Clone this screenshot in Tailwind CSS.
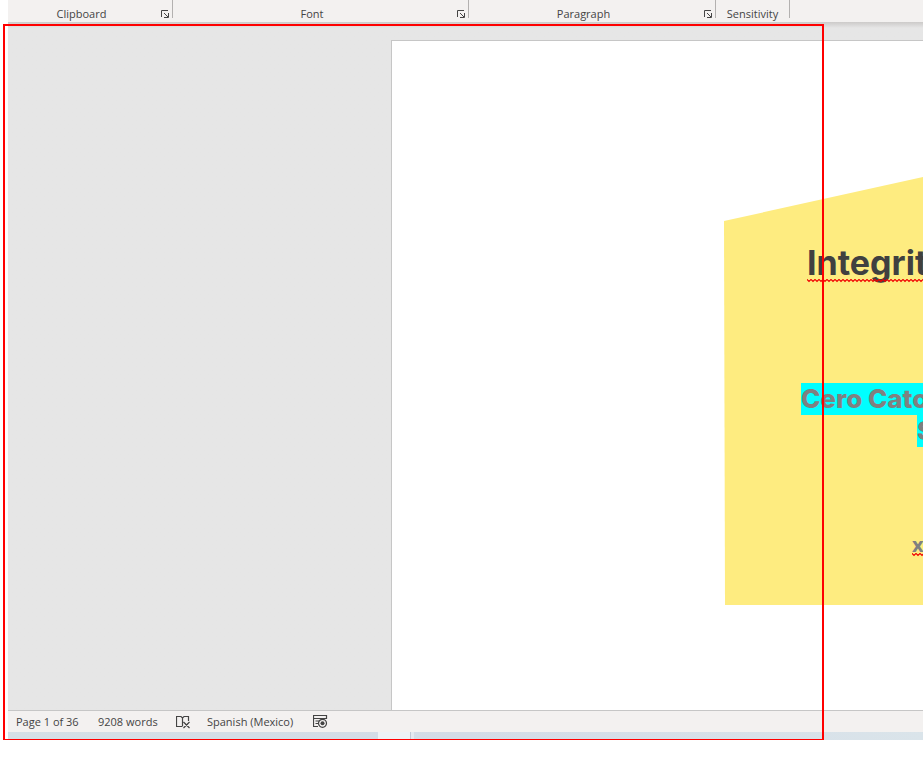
<!DOCTYPE html>
<html lang="en">
<head>
<meta charset="utf-8">
<meta name="viewport" content="width=device-width, initial-scale=1">
<title>Document editor</title>
<script src="https://cdn.jsdelivr.net/npm/@tailwindcss/browser@4"></script>
</head>
<body class="relative min-h-screen overflow-x-hidden bg-white font-['Open_Sans','Noto_Sans',sans-serif] text-[11px] leading-4 text-[#444444]">
<svg class="absolute size-0" aria-hidden="true">
  <defs>
    <pattern id="squiggle" width="4" height="4" patternUnits="userSpaceOnUse"><path d="M-1 0.5L0 0.5L2 2.5L4 0.5L5 0.5" fill="none" stroke="#f00000" stroke-width="1.2"/></pattern>
    <symbol id="launcher" viewBox="0 0 8 8"><path d="M.5 7V.5H7M3 3L7 7M7.5 3V7.5H3" fill="none" stroke="#444" stroke-width="1"/></symbol>
  </defs>
</svg>
<div class="ml-2 flex flex-col">
  <header class="flex h-[22px] bg-[#f3f1f0]">
    <section class="flex h-[18px] w-[165px] items-end border-r border-[#b3b1b0] pr-[3px]">
      <h2 class="-mb-1 flex-1 pr-[6px] text-center">Clipboard</h2>
      <button aria-label="Clipboard settings"><svg class="block size-2"><use href="#launcher"/></svg></button>
    </section>
    <section class="flex h-[18px] w-[296px] items-end border-r border-[#b3b1b0] pr-[3px]">
      <h2 class="-mb-1 flex-1 pr-[6px] text-center">Font</h2>
      <button aria-label="Font settings"><svg class="block size-2"><use href="#launcher"/></svg></button>
    </section>
    <section class="flex h-[18px] w-[247px] items-end border-r border-[#b3b1b0] pr-[3px]">
      <h2 class="-mb-1 flex-1 pr-[6px] text-center">Paragraph</h2>
      <button aria-label="Paragraph settings"><svg class="block size-2"><use href="#launcher"/></svg></button>
    </section>
    <section class="flex h-[18px] w-[74px] items-end border-r border-[#b3b1b0]">
      <h2 class="-mb-1 flex-1 text-center">Sensitivity</h2>
    </section>
  </header>
  <main class="flex h-[688px] overflow-hidden bg-[#e6e6e6] bg-linear-to-b from-[#cccac9] to-[#e6e6e6] to-[6px] pt-[18px] pl-[383px]">
    <article class="flex-1 overflow-hidden border-t border-l border-[#c6c6c6] bg-white pt-[136px] pl-[332px] font-[Inter,sans-serif] font-extrabold">
      <div class="h-[428px] w-[398px] bg-[#feec80] pt-[66px] [clip-path:polygon(0_44px,50%_0,100%_44px,100%_100%,1px_100%)]">
        <h1 class="ml-[83px] w-fit text-[34px] leading-[40px] font-bold whitespace-nowrap text-[#404040]">Integrity
          <svg class="-mt-1 block h-1 w-full" aria-hidden="true"><rect width="100%" height="4" fill="url(#squiggle)"/></svg>
        </h1>
        <div class="mt-[100px] pl-[77px] text-[26px] leading-8 whitespace-nowrap text-[#808080]">
          <p class="w-[244px] bg-[#00ffff]">Cero Cato</p>
          <p class="ml-[116px] w-fit bg-[#00ffff]">S</p>
        </div>
        <p class="mt-[86px] ml-[188px] w-fit font-['Open_Sans',sans-serif] text-[20px] leading-6 font-bold text-[#808080]">xx
          <svg class="-mt-1 block h-1 w-full" aria-hidden="true"><rect width="100%" height="4" fill="url(#squiggle)"/></svg>
        </p>
      </div>
    </article>
  </main>
  <footer class="flex h-[22px] items-center border-t border-[#c6c6c6] bg-[#f3f1f0] pl-2">
    <button class="w-[82px] text-left whitespace-nowrap">Page 1 of 36</button>
    <button class="w-[78px] text-left whitespace-nowrap">9208 words</button>
    <button class="w-[31px]" aria-label="Proofing errors"><svg class="block h-[14px] w-[15px]" viewBox="0 0 15 14" fill="none" stroke="#444" stroke-width="1.2"><path d="M6 11.5H.5V1.5H5L6.5 3L8 1.5H12.5V6M6.5 3V11.5M7.5 7L13.5 13M13.5 7L7.5 13"/></svg></button>
    <button class="w-[106px] text-left whitespace-nowrap">Spanish (Mexico)</button>
    <button aria-label="Macro recording"><svg class="block h-[13px] w-[15px]" viewBox="0 0 15 13" fill="none" stroke="#444" stroke-width="1.2"><path d="M5 11.5H.5V.5H13.5V4M.5 3.5H13.5M2.5 6H6M2.5 8.5H5"/><circle cx="9.5" cy="8.3" r="4"/><circle cx="9.5" cy="8.3" r="2" fill="#444" stroke="none"/></svg></button>
  </footer>
  <div class="flex h-2 bg-linear-to-r from-[#d5e0e7] via-[#d3dce7] to-[#dae4ea]">
    <div class="ml-[370px] w-8 bg-[#edf2f6]"></div>
    <div class="w-1 border-l border-[#bfc8d5] bg-[#e3e9f0]"></div>
  </div>
</div>
<div class="pointer-events-none absolute top-6 left-[3px] h-[716px] w-[821px] border-2 border-b border-[#ff0000]"></div>
</body>
</html>
